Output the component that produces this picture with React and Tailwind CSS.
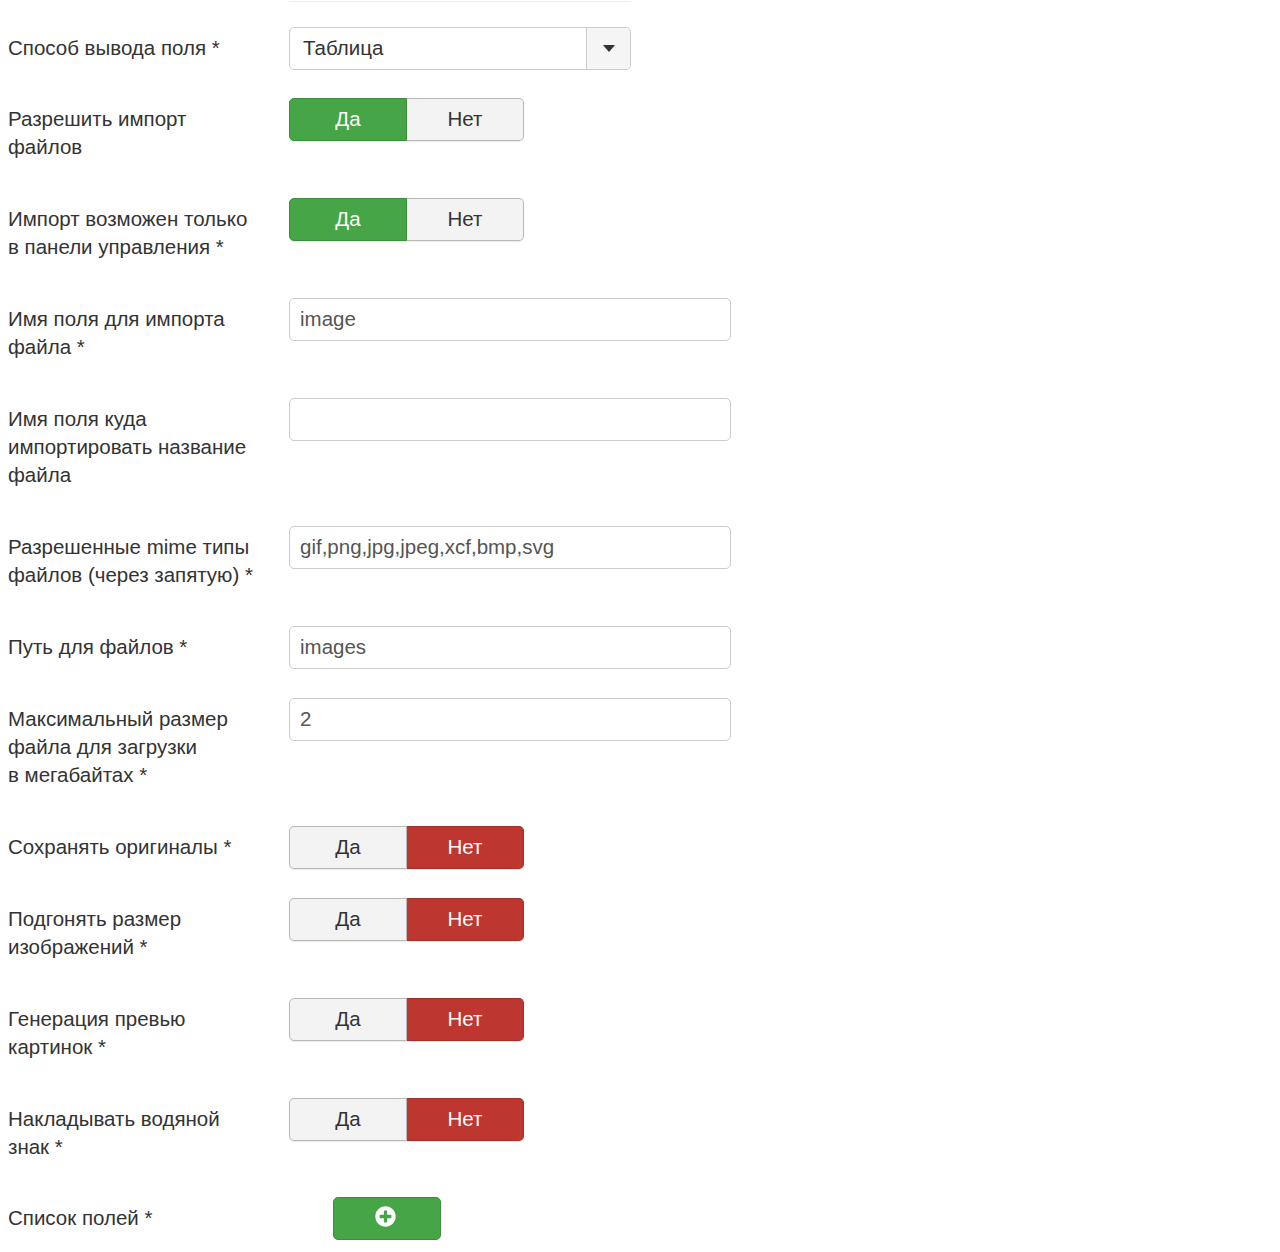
import { FaPlusCircle } from "react-icons/fa";

const Toggle = ({ value, color }) => {
  const on = color === "green" ? "bg-[#46a546] text-white border-[#3b8c3b]" : "bg-[#bd362f] text-white border-[#a32e28]";
  const off = "bg-[#f3f3f3] text-[#333] border-[#b8b8b8]";
  return (
    <div className="flex h-[43px] w-[235px] rounded-[5px] shadow-[0_1px_1px_rgba(0,0,0,0.08)]">
      <div
        className={`flex flex-1 items-center justify-center rounded-l-[5px] border ${value === "yes" ? on : off}`}
      >
        Да
      </div>
      <div
        className={`flex flex-1 items-center justify-center rounded-r-[5px] border border-l-0 ${value === "no" ? on : off}`}
      >
        Нет
      </div>
    </div>
  );
};

const Input = ({ value }) => (
  <div className="flex h-[43px] w-[442px] items-center rounded-[5px] border border-[#cccccc] bg-white px-[10px] text-[#555]">
    {value}
  </div>
);

const Row = ({ label, children, gap = "mb-[37px]" }) => (
  <div className={`${gap} flex`}>
    <div className="w-[257px] shrink-0 pt-[7px] leading-[28px]">
      {label.map((line) => (
        <div key={line} className="whitespace-nowrap">
          {line}
        </div>
      ))}
    </div>
    <div className="ml-[24px] h-[35px]">{children}</div>
  </div>
);

export default function App() {
  return (
    <div
      className="min-h-[1252px] bg-white pl-[8px] text-[20.5px] text-[#333]"
      style={{ fontFamily: '"Liberation Sans", Arial, sans-serif' }}
    >
      {/* bottom edge of the field above */}
      <div className="ml-[281px] h-[2px] w-[342px] border-b border-[#f0f0f0]" />
      <div className="pt-[25px]">
        <Row label={["Способ вывода поля *"]} gap="mb-[36px]">
          <div className="flex h-[43px] w-[342px] rounded-[5px] border border-[#cccccc] bg-white">
            <div className="flex flex-1 items-center pl-[13px]">Таблица</div>
            <div className="flex w-[44px] items-center justify-center rounded-r-[5px] border-l border-[#cccccc] bg-[#f5f5f5]">
              <svg width="12" height="7" viewBox="0 0 12 7">
                <path d="M0 0h12L6 7z" fill="#333" />
              </svg>
            </div>
          </div>
        </Row>
        <Row label={["Разрешить импорт", "файлов"]}>
          <Toggle value="yes" color="green" />
        </Row>
        <Row label={["Импорт возможен только", "в панели управления *"]}>
          <Toggle value="yes" color="green" />
        </Row>
        <Row label={["Имя поля для импорта", "файла *"]}>
          <Input value="image" />
        </Row>
        <Row label={["Имя поля куда", "импортировать название", "файла"]}>
          <Input value="" />
        </Row>
        <Row label={["Разрешенные mime типы", "файлов (через запятую) *"]}>
          <Input value="gif,png,jpg,jpeg,xcf,bmp,svg" />
        </Row>
        <Row label={["Путь для файлов *"]}>
          <Input value="images" />
        </Row>
        <Row label={["Максимальный размер", "файла для загрузки", "в мегабайтах *"]}>
          <Input value="2" />
        </Row>
        <Row label={["Сохранять оригиналы *"]}>
          <Toggle value="no" color="red" />
        </Row>
        <Row label={["Подгонять размер", "изображений *"]}>
          <Toggle value="no" color="red" />
        </Row>
        <Row label={["Генерация превью", "картинок *"]}>
          <Toggle value="no" color="red" />
        </Row>
        <Row label={["Накладывать водяной", "знак *"]} gap="mb-[36px]">
          <Toggle value="no" color="red" />
        </Row>
        <Row label={["Список полей *"]}>
          <div className="ml-[44px] flex h-[43px] w-[108px] items-center justify-center rounded-[5px] border border-[#3b8c3b] bg-[#46a546] pb-[4px] pr-[4px]">
            <FaPlusCircle className="h-[21px] w-[21px] text-white" />
          </div>
        </Row>
      </div>
    </div>
  );
}
